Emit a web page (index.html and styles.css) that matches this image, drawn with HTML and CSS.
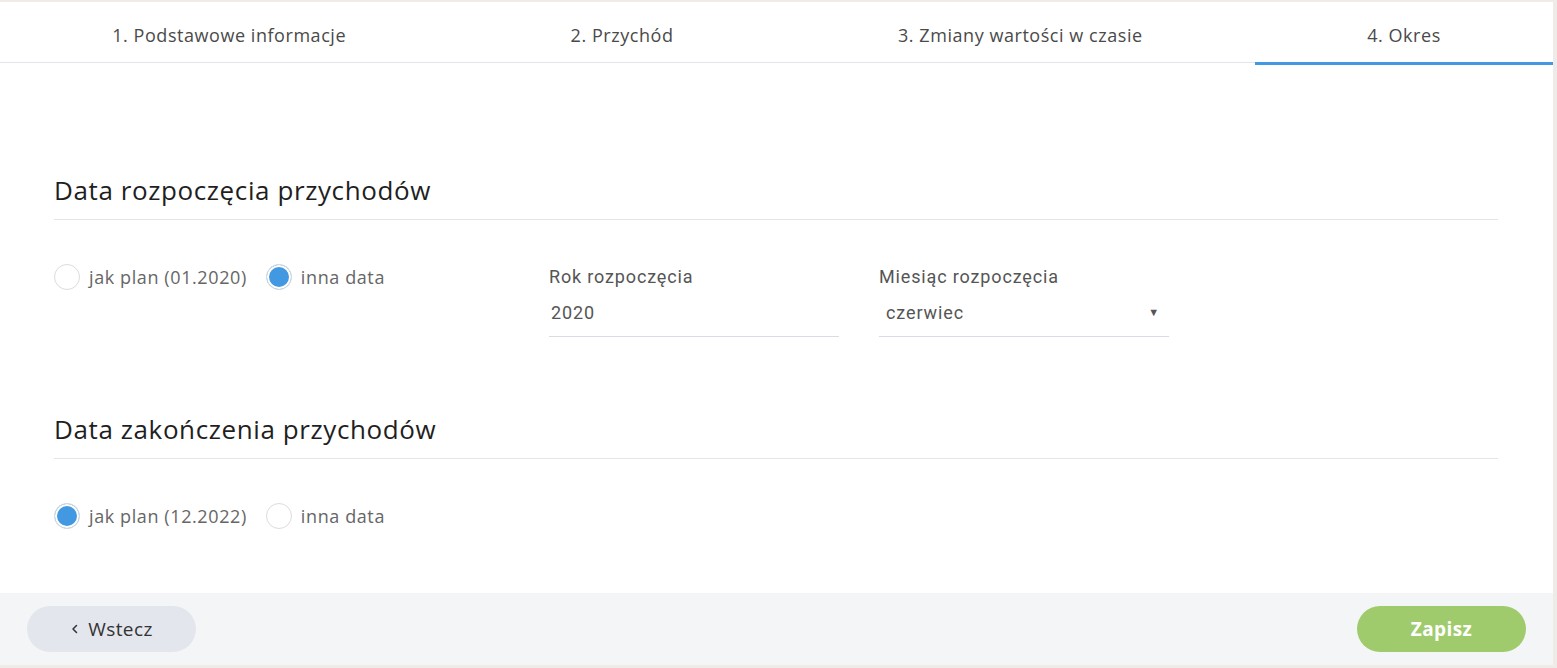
FILE: index.html
```html
<!DOCTYPE html>
<html lang="pl">
<head>
<meta charset="utf-8">
<title>Okres</title>
<link rel="stylesheet" href="styles.css">
</head>
<body>
<div class="card">
  <nav class="tabs">
    <div class="tab">1. Podstawowe informacje</div>
    <div class="tab">2. Przychód</div>
    <div class="tab">3. Zmiany wartości w czasie</div>
    <div class="tab active">4. Okres</div>
  </nav>
  <main class="content">
    <section class="section">
      <h2 class="section-title">Data rozpoczęcia przychodów</h2>
      <div class="row">
        <div class="options">
          <label class="option"><span class="radio"></span><span class="opt-text">jak plan (01.2020)</span></label>
          <label class="option"><span class="radio checked"></span><span class="opt-text">inna data</span></label>
        </div>
        <div class="field">
          <div class="field-label">Rok rozpoczęcia</div>
          <div class="field-input">2020</div>
        </div>
        <div class="field">
          <div class="field-label">Miesiąc rozpoczęcia</div>
          <div class="field-input select"><span class="sel-text">czerwiec</span><span class="arrow">▼</span></div>
        </div>
      </div>
    </section>
    <section class="section second">
      <h2 class="section-title">Data zakończenia przychodów</h2>
      <div class="row">
        <div class="options">
          <label class="option"><span class="radio checked"></span><span class="opt-text">jak plan (12.2022)</span></label>
          <label class="option"><span class="radio"></span><span class="opt-text">inna data</span></label>
        </div>
      </div>
    </section>
  </main>
  <footer class="footer">
    <button class="btn btn-back"><svg class="chev" width="10" height="12" viewBox="0 0 10 12"><polyline points="6.5,2.5 3,6 6.5,9.5" fill="none" stroke="#333" stroke-width="1.5" stroke-linecap="round" stroke-linejoin="round"/></svg><span>Wstecz</span></button>
    <button class="btn btn-save">Zapisz</button>
  </footer>
</div>
</body>
</html>
```

FILE: styles.css
```css
* { box-sizing: border-box; }
html, body { margin: 0; padding: 0; }
body {
  background: #eeebe9;
  width: 1557px;
  height: 668px;
  overflow: hidden;
  font-family: "Open Sans", "Noto Sans", "Liberation Sans", sans-serif;
}
.card {
  margin-top: 2px;
  width: 1553px;
  height: 663px;
  background: #fff;
  display: flex;
  flex-direction: column;
}
.tabs {
  display: flex;
  height: 61px;
  border-bottom: 1px solid #e4e5eb;
}
.tab {
  flex: 1 1 auto;
  text-align: center;
  font-size: 18px;
  line-height: 60px;
  padding: 3px 20px 0;
  color: #4a4a4a;
  letter-spacing: 0.55px;
  white-space: nowrap;
}
.tab.active {
  border-bottom: 3px solid #4299e1;
  height: 63px;
}
.content {
  flex: 1;
  padding: 111px 55px 0 54px;
}
.section-title {
  margin: 0;
  font-weight: 400;
  font-size: 26px;
  line-height: 32px;
  color: #1f1f1f;
  padding-bottom: 13px;
  border-bottom: 1px solid #e4e5eb;
  letter-spacing: 0.6px;
}
.second { margin-top: 76px; }
.row {
  margin-top: 44px;
  display: grid;
  grid-template-columns: 455px 290px 290px;
  column-gap: 40px;
  align-items: start;
}
.options {
  display: flex;
  align-items: center;
  gap: 19px;
  height: 26px;
}
.option {
  display: flex;
  align-items: center;
  gap: 9px;
}
.radio {
  width: 26px;
  height: 26px;
  border-radius: 50%;
  border: 1px solid #dcdcdc;
  background: #fff;
  flex: none;
}
.radio.checked {
  background: #4299e1;
  box-shadow: inset 0 0 0 2px #fff;
}
.opt-text {
  font-size: 18px;
  color: #666;
  line-height: 24px;
  letter-spacing: 0.6px;
}
.field { padding-top: 1px; }
.field-label {
  font-family: Roboto, "Liberation Sans", sans-serif;
  font-size: 18px;
  line-height: 24px;
  color: #555;
  letter-spacing: 0.85px;
}
.field-input {
  margin-top: 12px;
  font-family: Roboto, "Liberation Sans", sans-serif;
  font-size: 18px;
  line-height: 24px;
  color: #555;
  letter-spacing: 0.9px;
  padding: 0 0 11px 2px;
  border-bottom: 1px solid #d9dce3;
}
.select {
  display: flex;
  justify-content: space-between;
  align-items: center;
  padding-left: 7px;
  padding-right: 9px;
}
.arrow {
  font-size: 11px;
  color: #555;
}
.footer {
  height: 72px;
  background: #f4f5f7;
  display: flex;
  align-items: center;
  justify-content: space-between;
  padding: 0 27px;
}
.btn {
  width: 169px;
  height: 46px;
  border: none;
  border-radius: 23px;
  font-family: "Open Sans", "Noto Sans", sans-serif;
  font-size: 19px;
  letter-spacing: 0.4px;
  display: flex;
  align-items: center;
  justify-content: center;
  gap: 8px;
  padding: 0;
}
.btn-back {
  background: #e3e6ed;
  color: #333;
}
.btn-save {
  background: #9fcb6d;
  color: #fff;
  font-weight: 700;
}
.chev { display: block; }
```
